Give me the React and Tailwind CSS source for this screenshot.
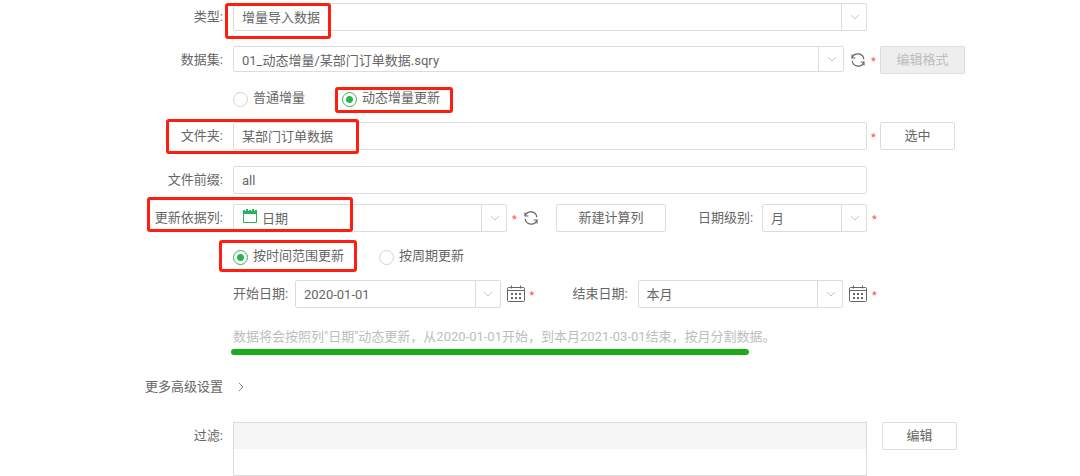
import { ChevronRight } from 'lucide-react'

function Row({ label, htmlFor, className = '', children, side }) {
  return (
    <div className={`grid grid-cols-[223px_1fr_213px] ${className}`}>
      <label htmlFor={htmlFor} className="text-right leading-7">
        {label}
      </label>
      <div className="ml-[10px] flex min-w-0 items-center">{children}</div>
      <div className="flex items-center">{side}</div>
    </div>
  )
}

// red frame drawn over the fields that need attention
function Mark({ className }) {
  return (
    <span
      className={`pointer-events-none absolute z-10 rounded-[3px] border-[3px] border-[#ff1d10] ${className}`}
    />
  )
}

function Required({ className = '' }) {
  return (
    <span className={`h-3 w-[5px] text-[11px] leading-4 text-[#ff4d4d] ${className}`}>*</span>
  )
}

function Combo({ id, value, label, icon, height = 'h-7' }) {
  return (
    <div className={`relative min-w-0 flex-1 ${height}`}>
      <select
        id={id}
        aria-label={label}
        className={`block h-full w-full appearance-none rounded-[2px] border border-[#dcdcdc] bg-white pr-7 pb-[2px] ${icon ? 'pl-[28px]' : 'pl-[8px]'}`}
      >
        <option>{value}</option>
      </select>
      {icon}
      <span className="pointer-events-none absolute inset-y-0 right-0 flex w-[26px] items-center justify-center border-l border-[#dcdcdc]">
        <svg width="10" height="6" viewBox="0 0 10 6" fill="none" stroke="#c4c4c4">
          <path d="M1 1l4 4 4-4" />
        </svg>
      </span>
    </div>
  )
}

function Radio({ name, label, checked }) {
  return (
    <label className="flex items-center gap-[5px]">
      <input
        type="radio"
        name={name}
        defaultChecked={checked}
        className="relative top-px h-[15px] w-[15px] appearance-none rounded-full border border-[#d4d4d4] bg-white checked:border-[#35b558] checked:bg-[radial-gradient(circle,#2bb34f_3px,#fff_4px)]"
      />
      {label}
    </label>
  )
}

function Button({ className = '', ...props }) {
  return (
    <button
      type="button"
      className={`h-7 rounded-[2px] border border-[#dcdcdc] bg-white leading-6 disabled:bg-[#eeeeee] disabled:text-[#bdbdbd] ${className}`}
      {...props}
    />
  )
}

function RefreshButton({ className = '' }) {
  return (
    <button type="button" aria-label="刷新" className={className}>
      <svg width="14" height="14" viewBox="0 0 14 14" fill="none" stroke="#666" strokeWidth="1.2">
        <path d="M1.2 4.8A6 6 0 0 1 12.8 6.2" />
        <path d="M12.8 9.2A6 6 0 0 1 1.2 7.8" />
        <path d="M1 1.6v3.4h3.4M13 12.4V9H9.6" />
      </svg>
    </button>
  )
}

function CalendarButton() {
  return (
    <button type="button" aria-label="选择日期" className="ml-[6px]">
      <svg width="18" height="18" viewBox="0 0 18 18" fill="none" stroke="#666">
        <rect x="0.5" y="2.5" width="17" height="14" rx="1" />
        <path d="M1 5.5h16M4.5 0.5v3M13.5 0.5v3" />
        <path d="M4 9h2M8 9h2M12 9h2M4 13h2M8 13h2M12 13h2" strokeWidth="2" />
      </svg>
    </button>
  )
}

function DateColumnIcon() {
  return (
    <svg
      className="pointer-events-none absolute top-[5px] left-[10px]"
      width="14"
      height="14"
      viewBox="0 0 14 14"
      fill="none"
      stroke="#27b35d"
    >
      <path d="M0.5 2.5h13v11h-13z" />
      <path d="M0 1h2v1h1V0h2v2h1V1h2v1h1V0h2v2h1V1h2v4H0z" fill="#27b35d" stroke="none" />
    </svg>
  )
}

const inputClass = 'h-7 w-full rounded-[2px] border border-[#dcdcdc] bg-white px-[8px] pt-[2px]'

export default function App() {
  return (
    <form className="overflow-hidden bg-white pt-[3px] font-['Roboto','Noto_Sans_CJK_SC',sans-serif] text-[13px] leading-7 text-[#666]">
      <div className="relative">
        <Row label="类型:" htmlFor="type">
          <Combo id="type" value="增量导入数据" />
        </Row>
        <Mark className="top-0 left-[225px] h-9 w-[106px]" />
      </div>

      <Row
        label="数据集:"
        htmlFor="dataset"
        className="mt-[15px]"
        side={<Button disabled className="ml-[13px] w-[85px]">编辑格式</Button>}
      >
        <Combo id="dataset" value="01_动态增量/某部门订单数据.sqry" height="mb-[2px] h-[26px]" />
        <RefreshButton className="ml-[7px]" />
        <Required className="-mr-[9px] ml-[6px]" />
      </Row>

      <Row className="mt-[10px]">
        <Radio name="mode" label="普通增量" />
        <div className="relative ml-[37px]">
          <Radio name="mode" label="动态增量更新" checked />
          <Mark className="top-[3px] -left-[7px] h-[26px] w-[118px]" />
        </div>
      </Row>

      <div className="relative mt-[10px]">
        <Row
          label="文件夹:"
          htmlFor="folder"
          side={
            <>
              <Required className="ml-[4px]" />
              <Button className="ml-[4px] w-[75px]">选中</Button>
            </>
          }
        >
          <input id="folder" defaultValue="某部门订单数据" className={inputClass} />
        </Row>
        <Mark className="-top-[3px] left-[166px] h-[35px] w-[193px]" />
      </div>

      <Row label="文件前缀:" htmlFor="prefix" className="mt-4">
        <input id="prefix" defaultValue="all" className={inputClass} />
      </Row>

      <div className="relative mt-[10px]">
        <Row label="更新依据列:" htmlFor="column" side={<Required className="ml-[5px]" />}>
          <Combo id="column" value="日期" icon={<DateColumnIcon />} />
          <Required className="ml-[5px]" />
          <RefreshButton className="ml-[7px]" />
          <Button className="ml-[18px] w-[110px]">新建计算列</Button>
          <label htmlFor="level" className="ml-8 w-16">
            日期级别:
          </label>
          <div className="flex w-[105px]">
            <Combo id="level" value="月" />
          </div>
        </Row>
        <Mark className="-top-[7px] left-[147px] h-[35px] w-[206px]" />
      </div>

      <Row className="mt-[10px]">
        <div className="relative">
          <Radio name="range" label="按时间范围更新" checked />
          <Mark className="-top-[2px] -left-[14px] h-8 w-[138px]" />
        </div>
        <div className="ml-[35px]">
          <Radio name="range" label="按周期更新" />
        </div>
      </Row>

      <Row className="mt-[10px]" side={<Required className="ml-[5px]" />}>
        <label htmlFor="start" className="w-[62px]">
          开始日期:
        </label>
        <Combo id="start" value="2020-01-01" />
        <CalendarButton />
        <Required className="ml-[5px]" />
        <label htmlFor="end" className="ml-[38px] w-[65px]">
          结束日期:
        </label>
        <Combo id="end" value="本月" />
        <CalendarButton />
      </Row>

      <Row className="mt-[15px]">
        <p className="relative whitespace-nowrap text-[#bdbdbd]">
          数据将会按照列"日期"动态更新，从2020-01-01开始，到本月2021-03-01结束，按月分割数据。
          <span className="absolute top-[26px] -left-[2px] h-[6px] w-[518px] rounded-full bg-[#1aad19]" />
        </p>
      </Row>

      <Row label="更多高级设置" htmlFor="more" className="mt-[22px]">
        <button id="more" type="button" aria-label="展开更多高级设置">
          <ChevronRight size={16} strokeWidth={1.5} color="#888" />
        </button>
      </Row>

      <Row
        label="过滤:"
        className="mt-[21px]"
        side={<Button className="mb-auto ml-[15px] w-[75px]">编辑</Button>}
      >
        <div className="h-[54px] w-full border border-[#dcdcdc]">
          <div className="h-[26px] bg-[#f6f6f6]" />
        </div>
      </Row>
    </form>
  )
}
